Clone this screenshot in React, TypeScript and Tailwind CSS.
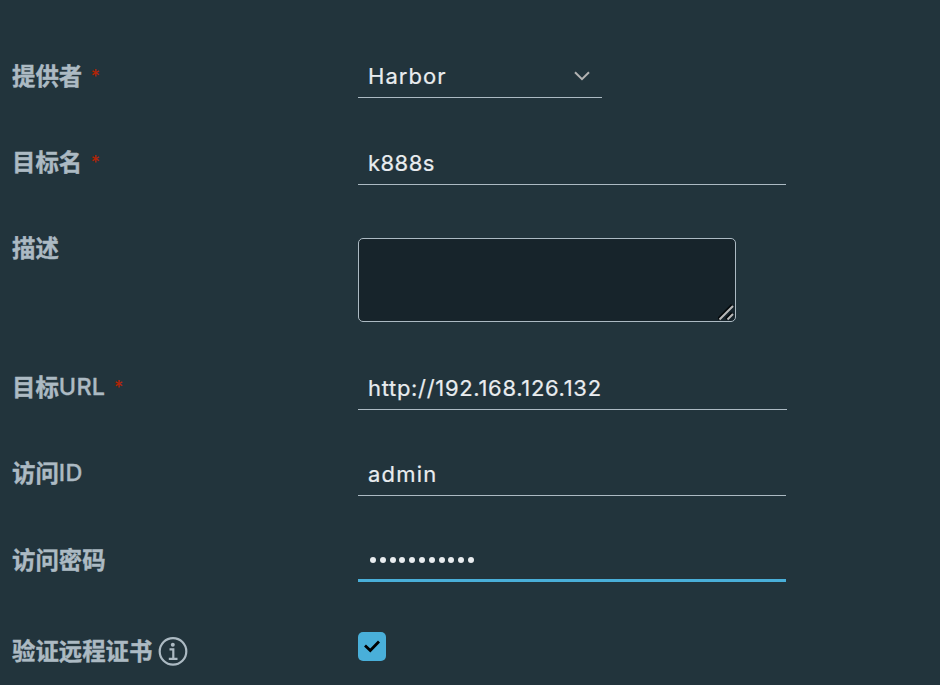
import type { ReactNode } from "react";

type RowProps = {
  label: string;
  required?: boolean;
  className: string;
  labelClass?: string;
  children: ReactNode;
  extra?: ReactNode;
};

function Row({ label, required, className, labelClass = "", children, extra }: RowProps) {
  const cjk = label.replace(/[A-Z]+$/, "");
  const latin = label.slice(cjk.length);
  return (
    <div className={`flex items-start ${className}`}>
      <div className={`flex h-[35px] w-[346px] shrink-0 items-center text-[23.4px] leading-[35px] text-[#acbac3] ${labelClass}`}>
        <span className="font-['Noto_Sans_CJK_SC',sans-serif] font-bold [-webkit-text-stroke:0.4px_#acbac3]">{cjk}</span>
        {latin && <span className="font-['Inter',sans-serif] font-medium tracking-[0.3px] [-webkit-text-stroke:0.3px_#acbac3]">{latin}</span>}
        {required && (
          <span className="ml-[8.5px] h-[35px] font-['Inter',sans-serif] text-[18px] leading-[38px] font-medium text-[#b32407]">*</span>
        )}
        {extra}
      </div>
      {children}
    </div>
  );
}

function Field({ value, className }: { value: string; className: string }) {
  return (
    <input
      readOnly
      value={value}
      className={`h-[43px] border-b border-[#acbac3] bg-transparent pl-[10px] font-['Inter',sans-serif] text-[22px] text-[#e9ecef] outline-none [-webkit-text-stroke:0.2px_#e9ecef] ${className}`}
    />
  );
}

export default function App() {
  return (
    <form className="h-[685px] w-[940px] overflow-hidden bg-[#22343c] pt-[55px] pl-[12px]">
      <Row label="提供者" required className="h-[87px]" labelClass="mt-[3px]">
        <div className="flex h-[43px] w-[244px] items-center justify-between border-b border-[#acbac3] pr-[11px] pl-[10px]">
          <span className="font-['Inter',sans-serif] text-[22px] tracking-[1.05px] text-[#e9ecef] [-webkit-text-stroke:0.2px_#e9ecef]">Harbor</span>
          <svg className="h-[12px] w-[18px]" viewBox="0 0 18 12" fill="none" stroke="#b3b3b3" strokeWidth="2">
            <path d="M2 2.2 9 9.2 16 2.2" />
          </svg>
        </div>
      </Row>
      <Row label="目标名" required className="h-[96px]" labelClass="mt-[2px]">
        <Field value="k888s" className="w-[428px] tracking-[0.45px]" />
      </Row>
      <Row label="描述" className="h-[129px]" labelClass="-mt-[8px]">
        <div className="flex h-[84px] w-[378px] items-end justify-end rounded-[5px] border border-[#acbac3] bg-[#17242b]">
          <svg className="h-[17px] w-[17px]" viewBox="0 0 17 17" fill="none">
            <path d="M0 15 14 1M8 15l6-6" stroke="#05090c" strokeWidth="2.5" />
            <path d="M1.5 15.5 15 2M9.5 15.5 15 10" stroke="#b8b8b8" strokeWidth="2" />
          </svg>
        </div>
      </Row>
      <Row label="目标URL" required className="h-[86px]" labelClass="mt-[2px]">
        <Field value="http://192.168.126.132" className="w-[429px] tracking-[0.68px]" />
      </Row>
      <Row label="访问ID" className="h-[86px]" labelClass="mt-[2px]">
        <Field value="admin" className="w-[428px] tracking-[1.2px]" />
      </Row>
      <Row label="访问密码" className="h-[93px]" labelClass="mt-[3px]">
        <div className="flex h-[43px] w-[428px] items-center gap-[3.8px] border-b-[3px] border-[#49afd9] pl-[12px]">
          {Array.from({ length: 11 }, (_, i) => (
            <span key={i} className="mt-[2px] h-[6px] w-[6px] rounded-full bg-[#e9ecef]" />
          ))}
        </div>
      </Row>
      <Row
        label="验证远程证书"
        className="h-[53px]"
        labelClass="mt-[1px]"
        extra={
          <svg className="ml-[6px] h-[30px] w-[30px]" viewBox="0 0 30 30" fill="none" stroke="#acbac3" strokeWidth="2.2">
            <circle cx="15" cy="15.4" r="13.3" />
            <circle cx="14.8" cy="8.7" r="2" fill="#acbac3" stroke="none" />
            <path d="M11.5 13.4H15.3V22.7M10.8 22.9H19.5" />
          </svg>
        }
      >
        <div className="flex h-[29px] w-[28px] items-center justify-center rounded-[5px] bg-[#49afd9]">
          <svg className="mb-[2px] h-[14px] w-[18px]" viewBox="0 0 18 14" fill="none" stroke="#000" strokeWidth="2.8">
            <path d="M2 6.5 7.3 11.5 16 2.5" />
          </svg>
        </div>
      </Row>
    </form>
  );
}
